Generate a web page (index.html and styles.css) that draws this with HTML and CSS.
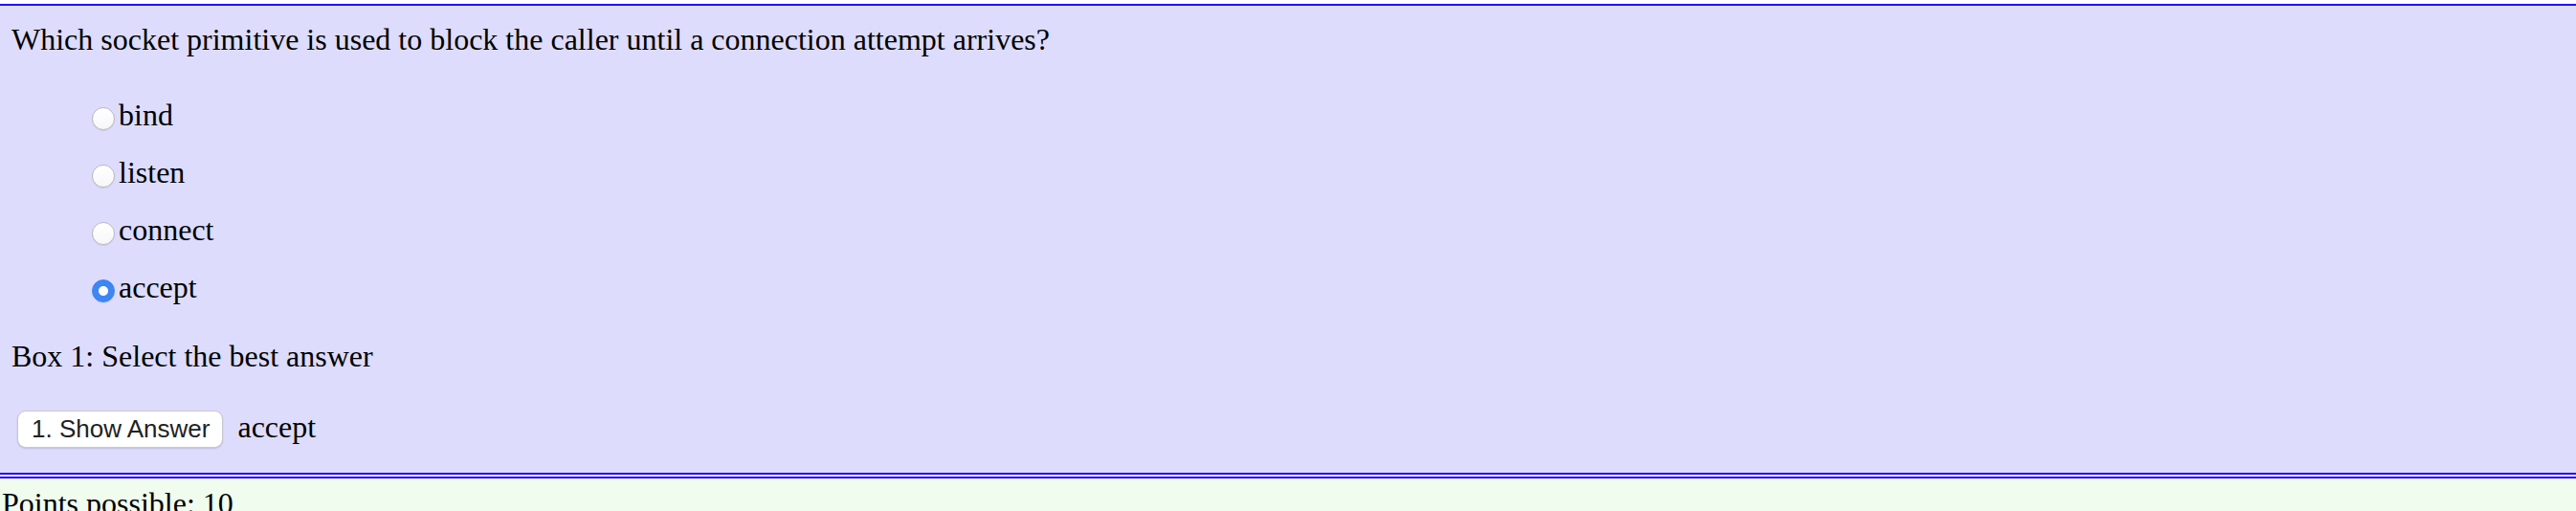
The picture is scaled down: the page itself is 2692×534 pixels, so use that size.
FILE: index.html
```html
<!DOCTYPE html>
<html lang="en">
<head>
<meta charset="utf-8">
<title>Socket primitive question</title>
<link rel="stylesheet" href="styles.css">
</head>
<body>
<div class="page">
  <form class="qbox">
    <p class="question">Which socket primitive is used to block the caller until a connection attempt arrives?</p>
    <div class="options">
      <label class="option"><input type="radio" name="q1" class="radio">bind</label>
      <label class="option"><input type="radio" name="q1" class="radio">listen</label>
      <label class="option"><input type="radio" name="q1" class="radio">connect</label>
      <label class="option"><input type="radio" name="q1" class="radio" checked>accept</label>
    </div>
    <p class="box-label">Box 1: Select the best answer</p>
    <div class="answer-row">
      <button type="button" class="show-btn">1. Show Answer</button>
      <span class="answer">accept</span>
    </div>
  </form>
  <div class="points">Points possible: 10</div>
</div>
</body>
</html>
```

FILE: styles.css
```css
html, body {
  margin: 0;
  padding: 0;
  background: #ffffff;
}

body {
  font-family: "Liberation Serif", "Times New Roman", serif;
  font-size: 32px;
  line-height: 36px;
  color: #000;
}

.page {
  padding-top: 4px;
}

.qbox {
  display: block;
  background: #dddcfc;
  border-top: 2px solid #2200ff;
  border-bottom: 2px solid #2200ff;
  padding: 17px 12px 26px 12px;
  margin: 0 0 2px 0;
}

.question {
  margin: 0;
}

.options {
  display: flex;
  flex-direction: column;
  gap: 24px;
  margin: 43px 0 0 84px;
}

.option {
  display: block;
  height: 36px;
}

.radio {
  -webkit-appearance: none;
  appearance: none;
  display: inline-block;
  box-sizing: border-box;
  width: 24px;
  height: 24px;
  margin: 0 4px 0 0;
  border-radius: 50%;
  border: 1px solid #b9b9c0;
  background: linear-gradient(#ffffff, #f7f7f9);
  box-shadow: 0 1px 1px rgba(0, 0, 0, 0.08);
  vertical-align: -5px;
}

.radio:checked {
  border-color: #3c82f2;
  background: radial-gradient(circle at center, #ffffff 0, #ffffff 4.5px, #3f86f5 5.5px);
}

.box-label {
  margin: 36px 0 0 0;
}

.answer-row {
  display: flex;
  align-items: baseline;
  gap: 15px;
  margin-top: 38px;
  padding-left: 6px;
}

.show-btn {
  font-family: "Liberation Sans", Arial, sans-serif;
  font-size: 26px;
  line-height: 29px;
  color: #222;
  background: #ffffff;
  border: 1px solid #c8c8d0;
  border-radius: 9px;
  box-shadow: 0 1px 2px rgba(0, 0, 0, 0.14);
  height: 39px;
  padding: 0 13px 0 14px;
  margin: 0;
  box-sizing: border-box;
}

.answer {
  line-height: 36px;
}

.points {
  background: #effcee;
  border-top: 2px solid #2200ff;
  padding: 8px 0 0 2px;
  min-height: 60px;
}
```
